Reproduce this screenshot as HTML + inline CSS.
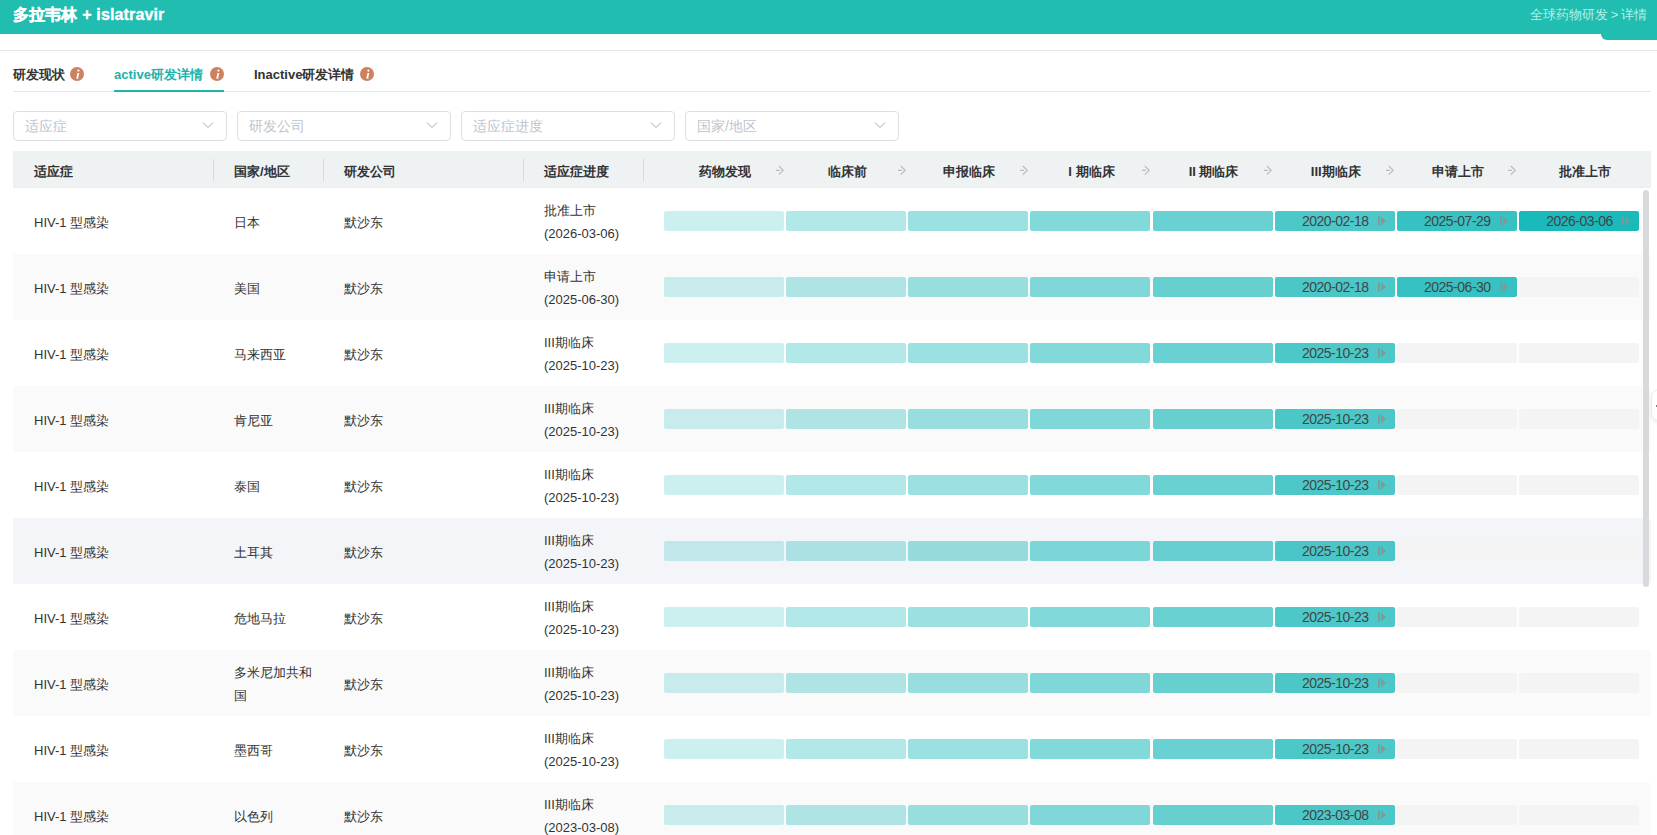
<!DOCTYPE html><html><head><meta charset="utf-8"><style>
*{margin:0;padding:0;box-sizing:border-box}
html,body{width:1657px;height:835px;overflow:hidden;background:#fff}
body{font-family:"Liberation Sans",sans-serif;font-size:13px;color:#333;position:relative}
.a{position:absolute;white-space:nowrap}
.hdr{left:0;top:0;width:1657px;height:34px;background:#20BDB0}
.htab{left:1601px;top:30px;width:56px;height:10px;background:#20BDB0;border-bottom-left-radius:6px}
.title{left:13px;top:5px;font-size:16px;font-weight:bold;color:#fff;line-height:20px;-webkit-text-stroke:0.35px #fff;letter-spacing:0.15px}
.crumb{right:10px;top:7px;font-size:13px;color:#B0F2E8;line-height:16px;word-spacing:-1px}
.line{background:#E6E6E6;height:1px}
.tab{top:66px;font-weight:bold;font-size:13px;line-height:18px;color:#333}
.dd{top:111px;width:214px;height:30px;border:1px solid #DCDFE6;border-radius:4px}
.dd span{position:absolute;left:11px;top:6px;font-size:14px;color:#C0C4CC;line-height:16px}
.dd svg{position:absolute;left:188px;top:9px}
.th{left:13px;top:151px;width:1638px;height:37px;background:#EEF2F3;border-bottom:1px solid #E9ECF2}
.tht{top:164px;font-weight:bold;line-height:16px}
.div{top:159px;width:1px;height:22px;background:#D6DADC}
.row{left:13px;width:1638px;height:66px;border-radius:0 4px 4px 0}
.cell{line-height:16px}
.bar{height:20px;border-radius:2px}
.dt{font-size:14px;color:#444;line-height:20px;text-align:center;letter-spacing:-0.5px;text-indent:1px}
.sb{left:1643px;top:190px;width:6px;height:397px;border-radius:3px;background:#D8D9DC}
</style></head><body><div class="a hdr"></div><div class="a htab"></div><div class="a title">多拉韦林 + islatravir</div><div class="a crumb">全球药物研发 &gt; 详情</div><div class="a line" style="left:0;top:50px;width:1657px"></div><div class="a line" style="left:13px;top:91px;width:1638px;background:#E4E7ED"></div><div class="a tab" style="left:13px">研发现状</div><div class="a tab" style="left:114px;color:#20B2A8">active研发详情</div><div class="a" style="left:114px;top:90px;width:110px;height:2px;background:#20B5AA"></div><div class="a tab" style="left:254px">Inactive研发详情</div><div class="a" style="left:70px;top:67px;line-height:0"><svg width="14" height="14" viewBox="0 0 14 14"><circle cx="7" cy="7" r="7" fill="#CC825E"/><circle cx="8.4" cy="3.6" r="1.1" fill="#fff"/><path d="M7.5 5.9 L9.3 5.9 L8.1 10.9 L9 10.9 L8.8 11.6 L5.9 11.6 L6.1 10.9 L6.4 10.9 Z" fill="#fff"/></svg></div><div class="a" style="left:210px;top:67px;line-height:0"><svg width="14" height="14" viewBox="0 0 14 14"><circle cx="7" cy="7" r="7" fill="#CC825E"/><circle cx="8.4" cy="3.6" r="1.1" fill="#fff"/><path d="M7.5 5.9 L9.3 5.9 L8.1 10.9 L9 10.9 L8.8 11.6 L5.9 11.6 L6.1 10.9 L6.4 10.9 Z" fill="#fff"/></svg></div><div class="a" style="left:360px;top:67px;line-height:0"><svg width="14" height="14" viewBox="0 0 14 14"><circle cx="7" cy="7" r="7" fill="#CC825E"/><circle cx="8.4" cy="3.6" r="1.1" fill="#fff"/><path d="M7.5 5.9 L9.3 5.9 L8.1 10.9 L9 10.9 L8.8 11.6 L5.9 11.6 L6.1 10.9 L6.4 10.9 Z" fill="#fff"/></svg></div><div class="a dd" style="left:13px"><span>适应症</span><svg width="12" height="8" viewBox="0 0 12 8"><path d="M1 1.5 L6 6.5 L11 1.5" fill="none" stroke="#A8ADB5" stroke-width="1"/></svg></div><div class="a dd" style="left:237px"><span>研发公司</span><svg width="12" height="8" viewBox="0 0 12 8"><path d="M1 1.5 L6 6.5 L11 1.5" fill="none" stroke="#A8ADB5" stroke-width="1"/></svg></div><div class="a dd" style="left:461px"><span>适应症进度</span><svg width="12" height="8" viewBox="0 0 12 8"><path d="M1 1.5 L6 6.5 L11 1.5" fill="none" stroke="#A8ADB5" stroke-width="1"/></svg></div><div class="a dd" style="left:685px"><span>国家/地区</span><svg width="12" height="8" viewBox="0 0 12 8"><path d="M1 1.5 L6 6.5 L11 1.5" fill="none" stroke="#A8ADB5" stroke-width="1"/></svg></div><div class="a th"></div><div class="a tht" style="left:34px">适应症</div><div class="a tht" style="left:234px">国家/地区</div><div class="a tht" style="left:344px">研发公司</div><div class="a tht" style="left:544px">适应症进度</div><div class="a div" style="left:213px"></div><div class="a div" style="left:323px"></div><div class="a div" style="left:523px"></div><div class="a div" style="left:643px"></div><div class="a tht" style="left:665.00px;width:120.00px;text-align:center">药物发现</div><div class="a" style="left:776.00px;top:165px;line-height:0"><svg width="10" height="11" viewBox="0 0 10 11"><path d="M0 5.3 H4 M2.8 1 L7.2 5.3 L2.8 9.6" fill="none" stroke="#B9BDC3" stroke-width="1.2"/></svg></div><div class="a tht" style="left:787.14px;width:120.00px;text-align:center">临床前</div><div class="a" style="left:897.92px;top:165px;line-height:0"><svg width="10" height="11" viewBox="0 0 10 11"><path d="M0 5.3 H4 M2.8 1 L7.2 5.3 L2.8 9.6" fill="none" stroke="#B9BDC3" stroke-width="1.2"/></svg></div><div class="a tht" style="left:909.28px;width:120.00px;text-align:center">申报临床</div><div class="a" style="left:1019.84px;top:165px;line-height:0"><svg width="10" height="11" viewBox="0 0 10 11"><path d="M0 5.3 H4 M2.8 1 L7.2 5.3 L2.8 9.6" fill="none" stroke="#B9BDC3" stroke-width="1.2"/></svg></div><div class="a tht" style="left:1031.42px;width:120.00px;text-align:center">I 期临床</div><div class="a" style="left:1141.76px;top:165px;line-height:0"><svg width="10" height="11" viewBox="0 0 10 11"><path d="M0 5.3 H4 M2.8 1 L7.2 5.3 L2.8 9.6" fill="none" stroke="#B9BDC3" stroke-width="1.2"/></svg></div><div class="a tht" style="left:1153.56px;width:120.00px;text-align:center">II 期临床</div><div class="a" style="left:1263.68px;top:165px;line-height:0"><svg width="10" height="11" viewBox="0 0 10 11"><path d="M0 5.3 H4 M2.8 1 L7.2 5.3 L2.8 9.6" fill="none" stroke="#B9BDC3" stroke-width="1.2"/></svg></div><div class="a tht" style="left:1275.70px;width:120.00px;text-align:center">III期临床</div><div class="a" style="left:1385.60px;top:165px;line-height:0"><svg width="10" height="11" viewBox="0 0 10 11"><path d="M0 5.3 H4 M2.8 1 L7.2 5.3 L2.8 9.6" fill="none" stroke="#B9BDC3" stroke-width="1.2"/></svg></div><div class="a tht" style="left:1397.84px;width:120.00px;text-align:center">申请上市</div><div class="a" style="left:1507.52px;top:165px;line-height:0"><svg width="10" height="11" viewBox="0 0 10 11"><path d="M0 5.3 H4 M2.8 1 L7.2 5.3 L2.8 9.6" fill="none" stroke="#B9BDC3" stroke-width="1.2"/></svg></div><div class="a tht" style="left:1524.98px;width:120.00px;text-align:center">批准上市</div><div class="a row" style="top:188px;background:#FFFFFF"></div><div class="a cell" style="left:34px;top:215px">HIV-1 型感染</div><div class="a cell" style="left:234px;top:215px">日本</div><div class="a cell" style="left:344px;top:215px">默沙东</div><div class="a cell" style="left:544px;top:198.5px;line-height:23px">批准上市<br>(2026-03-06)</div><div class="a bar" style="left:664.00px;top:211px;width:120.00px;background:rgba(26,185,186,0.225)"></div><div class="a bar" style="left:786.14px;top:211px;width:120.00px;background:rgba(26,185,186,0.335)"></div><div class="a bar" style="left:908.28px;top:211px;width:120.00px;background:rgba(26,185,186,0.43)"></div><div class="a bar" style="left:1030.42px;top:211px;width:120.00px;background:rgba(26,185,186,0.55)"></div><div class="a bar" style="left:1152.56px;top:211px;width:120.00px;background:rgba(26,185,186,0.65)"></div><div class="a bar" style="left:1274.70px;top:211px;width:120.00px;background:rgba(26,185,186,0.78)"><div class="a dt" style="left:0;top:0;width:120.00px">2020-02-18</div><svg class="a" style="left:103px;top:5px" width="10" height="10" viewBox="0 0 10 10"><rect x="0" y="0.5" width="2" height="9" fill="#8F8F8F" fill-opacity="0.85"/><path d="M3 0.5 L8 5 L3 9.5 Z" fill="#8F8F8F" fill-opacity="0.85"/></svg></div><div class="a bar" style="left:1396.84px;top:211px;width:120.00px;background:rgba(26,185,186,0.88)"><div class="a dt" style="left:0;top:0;width:120.00px">2025-07-29</div><svg class="a" style="left:103px;top:5px" width="10" height="10" viewBox="0 0 10 10"><rect x="0" y="0.5" width="2" height="9" fill="#8F8F8F" fill-opacity="0.85"/><path d="M3 0.5 L8 5 L3 9.5 Z" fill="#8F8F8F" fill-opacity="0.85"/></svg></div><div class="a bar" style="left:1518.98px;top:211px;width:120.00px;background:rgba(26,185,186,1.0)"><div class="a dt" style="left:0;top:0;width:120.00px">2026-03-06</div><svg class="a" style="left:103px;top:5px" width="10" height="10" viewBox="0 0 10 10"><rect x="0" y="0.5" width="2" height="9" fill="#8F8F8F" fill-opacity="0.85"/><path d="M3 0.5 L8 5 L3 9.5 Z" fill="#8F8F8F" fill-opacity="0.85"/></svg></div><div class="a row" style="top:254px;background:#FAFAFA"></div><div class="a cell" style="left:34px;top:281px">HIV-1 型感染</div><div class="a cell" style="left:234px;top:281px">美国</div><div class="a cell" style="left:344px;top:281px">默沙东</div><div class="a cell" style="left:544px;top:264.5px;line-height:23px">申请上市<br>(2025-06-30)</div><div class="a bar" style="left:664.00px;top:277px;width:120.00px;background:rgba(26,185,186,0.225)"></div><div class="a bar" style="left:786.14px;top:277px;width:120.00px;background:rgba(26,185,186,0.335)"></div><div class="a bar" style="left:908.28px;top:277px;width:120.00px;background:rgba(26,185,186,0.43)"></div><div class="a bar" style="left:1030.42px;top:277px;width:120.00px;background:rgba(26,185,186,0.55)"></div><div class="a bar" style="left:1152.56px;top:277px;width:120.00px;background:rgba(26,185,186,0.65)"></div><div class="a bar" style="left:1274.70px;top:277px;width:120.00px;background:rgba(26,185,186,0.78)"><div class="a dt" style="left:0;top:0;width:120.00px">2020-02-18</div><svg class="a" style="left:103px;top:5px" width="10" height="10" viewBox="0 0 10 10"><rect x="0" y="0.5" width="2" height="9" fill="#8F8F8F" fill-opacity="0.85"/><path d="M3 0.5 L8 5 L3 9.5 Z" fill="#8F8F8F" fill-opacity="0.85"/></svg></div><div class="a bar" style="left:1396.84px;top:277px;width:120.00px;background:rgba(26,185,186,0.88)"><div class="a dt" style="left:0;top:0;width:120.00px">2025-06-30</div><svg class="a" style="left:103px;top:5px" width="10" height="10" viewBox="0 0 10 10"><rect x="0" y="0.5" width="2" height="9" fill="#8F8F8F" fill-opacity="0.85"/><path d="M3 0.5 L8 5 L3 9.5 Z" fill="#8F8F8F" fill-opacity="0.85"/></svg></div><div class="a bar" style="left:1518.98px;top:277px;width:120.00px;background:#F4F4F4"></div><div class="a row" style="top:320px;background:#FFFFFF"></div><div class="a cell" style="left:34px;top:347px">HIV-1 型感染</div><div class="a cell" style="left:234px;top:347px">马来西亚</div><div class="a cell" style="left:344px;top:347px">默沙东</div><div class="a cell" style="left:544px;top:330.5px;line-height:23px">III期临床<br>(2025-10-23)</div><div class="a bar" style="left:664.00px;top:343px;width:120.00px;background:rgba(26,185,186,0.225)"></div><div class="a bar" style="left:786.14px;top:343px;width:120.00px;background:rgba(26,185,186,0.335)"></div><div class="a bar" style="left:908.28px;top:343px;width:120.00px;background:rgba(26,185,186,0.43)"></div><div class="a bar" style="left:1030.42px;top:343px;width:120.00px;background:rgba(26,185,186,0.55)"></div><div class="a bar" style="left:1152.56px;top:343px;width:120.00px;background:rgba(26,185,186,0.65)"></div><div class="a bar" style="left:1274.70px;top:343px;width:120.00px;background:rgba(26,185,186,0.78)"><div class="a dt" style="left:0;top:0;width:120.00px">2025-10-23</div><svg class="a" style="left:103px;top:5px" width="10" height="10" viewBox="0 0 10 10"><rect x="0" y="0.5" width="2" height="9" fill="#8F8F8F" fill-opacity="0.85"/><path d="M3 0.5 L8 5 L3 9.5 Z" fill="#8F8F8F" fill-opacity="0.85"/></svg></div><div class="a bar" style="left:1396.84px;top:343px;width:120.00px;background:#F4F4F4"></div><div class="a bar" style="left:1518.98px;top:343px;width:120.00px;background:#F4F4F4"></div><div class="a row" style="top:386px;background:#FAFAFA"></div><div class="a cell" style="left:34px;top:413px">HIV-1 型感染</div><div class="a cell" style="left:234px;top:413px">肯尼亚</div><div class="a cell" style="left:344px;top:413px">默沙东</div><div class="a cell" style="left:544px;top:396.5px;line-height:23px">III期临床<br>(2025-10-23)</div><div class="a bar" style="left:664.00px;top:409px;width:120.00px;background:rgba(26,185,186,0.225)"></div><div class="a bar" style="left:786.14px;top:409px;width:120.00px;background:rgba(26,185,186,0.335)"></div><div class="a bar" style="left:908.28px;top:409px;width:120.00px;background:rgba(26,185,186,0.43)"></div><div class="a bar" style="left:1030.42px;top:409px;width:120.00px;background:rgba(26,185,186,0.55)"></div><div class="a bar" style="left:1152.56px;top:409px;width:120.00px;background:rgba(26,185,186,0.65)"></div><div class="a bar" style="left:1274.70px;top:409px;width:120.00px;background:rgba(26,185,186,0.78)"><div class="a dt" style="left:0;top:0;width:120.00px">2025-10-23</div><svg class="a" style="left:103px;top:5px" width="10" height="10" viewBox="0 0 10 10"><rect x="0" y="0.5" width="2" height="9" fill="#8F8F8F" fill-opacity="0.85"/><path d="M3 0.5 L8 5 L3 9.5 Z" fill="#8F8F8F" fill-opacity="0.85"/></svg></div><div class="a bar" style="left:1396.84px;top:409px;width:120.00px;background:#F4F4F4"></div><div class="a bar" style="left:1518.98px;top:409px;width:120.00px;background:#F4F4F4"></div><div class="a row" style="top:452px;background:#FFFFFF"></div><div class="a cell" style="left:34px;top:479px">HIV-1 型感染</div><div class="a cell" style="left:234px;top:479px">泰国</div><div class="a cell" style="left:344px;top:479px">默沙东</div><div class="a cell" style="left:544px;top:462.5px;line-height:23px">III期临床<br>(2025-10-23)</div><div class="a bar" style="left:664.00px;top:475px;width:120.00px;background:rgba(26,185,186,0.225)"></div><div class="a bar" style="left:786.14px;top:475px;width:120.00px;background:rgba(26,185,186,0.335)"></div><div class="a bar" style="left:908.28px;top:475px;width:120.00px;background:rgba(26,185,186,0.43)"></div><div class="a bar" style="left:1030.42px;top:475px;width:120.00px;background:rgba(26,185,186,0.55)"></div><div class="a bar" style="left:1152.56px;top:475px;width:120.00px;background:rgba(26,185,186,0.65)"></div><div class="a bar" style="left:1274.70px;top:475px;width:120.00px;background:rgba(26,185,186,0.78)"><div class="a dt" style="left:0;top:0;width:120.00px">2025-10-23</div><svg class="a" style="left:103px;top:5px" width="10" height="10" viewBox="0 0 10 10"><rect x="0" y="0.5" width="2" height="9" fill="#8F8F8F" fill-opacity="0.85"/><path d="M3 0.5 L8 5 L3 9.5 Z" fill="#8F8F8F" fill-opacity="0.85"/></svg></div><div class="a bar" style="left:1396.84px;top:475px;width:120.00px;background:#F4F4F4"></div><div class="a bar" style="left:1518.98px;top:475px;width:120.00px;background:#F4F4F4"></div><div class="a row" style="top:518px;background:#F3F5F8"></div><div class="a cell" style="left:34px;top:545px">HIV-1 型感染</div><div class="a cell" style="left:234px;top:545px">土耳其</div><div class="a cell" style="left:344px;top:545px">默沙东</div><div class="a cell" style="left:544px;top:528.5px;line-height:23px">III期临床<br>(2025-10-23)</div><div class="a bar" style="left:664.00px;top:541px;width:120.00px;background:rgba(26,185,186,0.225)"></div><div class="a bar" style="left:786.14px;top:541px;width:120.00px;background:rgba(26,185,186,0.335)"></div><div class="a bar" style="left:908.28px;top:541px;width:120.00px;background:rgba(26,185,186,0.43)"></div><div class="a bar" style="left:1030.42px;top:541px;width:120.00px;background:rgba(26,185,186,0.55)"></div><div class="a bar" style="left:1152.56px;top:541px;width:120.00px;background:rgba(26,185,186,0.65)"></div><div class="a bar" style="left:1274.70px;top:541px;width:120.00px;background:rgba(26,185,186,0.78)"><div class="a dt" style="left:0;top:0;width:120.00px">2025-10-23</div><svg class="a" style="left:103px;top:5px" width="10" height="10" viewBox="0 0 10 10"><rect x="0" y="0.5" width="2" height="9" fill="#8F8F8F" fill-opacity="0.85"/><path d="M3 0.5 L8 5 L3 9.5 Z" fill="#8F8F8F" fill-opacity="0.85"/></svg></div><div class="a bar" style="left:1396.84px;top:541px;width:120.00px;background:#F4F4F4"></div><div class="a bar" style="left:1518.98px;top:541px;width:120.00px;background:#F4F4F4"></div><div class="a row" style="top:584px;background:#FFFFFF"></div><div class="a cell" style="left:34px;top:611px">HIV-1 型感染</div><div class="a cell" style="left:234px;top:611px">危地马拉</div><div class="a cell" style="left:344px;top:611px">默沙东</div><div class="a cell" style="left:544px;top:594.5px;line-height:23px">III期临床<br>(2025-10-23)</div><div class="a bar" style="left:664.00px;top:607px;width:120.00px;background:rgba(26,185,186,0.225)"></div><div class="a bar" style="left:786.14px;top:607px;width:120.00px;background:rgba(26,185,186,0.335)"></div><div class="a bar" style="left:908.28px;top:607px;width:120.00px;background:rgba(26,185,186,0.43)"></div><div class="a bar" style="left:1030.42px;top:607px;width:120.00px;background:rgba(26,185,186,0.55)"></div><div class="a bar" style="left:1152.56px;top:607px;width:120.00px;background:rgba(26,185,186,0.65)"></div><div class="a bar" style="left:1274.70px;top:607px;width:120.00px;background:rgba(26,185,186,0.78)"><div class="a dt" style="left:0;top:0;width:120.00px">2025-10-23</div><svg class="a" style="left:103px;top:5px" width="10" height="10" viewBox="0 0 10 10"><rect x="0" y="0.5" width="2" height="9" fill="#8F8F8F" fill-opacity="0.85"/><path d="M3 0.5 L8 5 L3 9.5 Z" fill="#8F8F8F" fill-opacity="0.85"/></svg></div><div class="a bar" style="left:1396.84px;top:607px;width:120.00px;background:#F4F4F4"></div><div class="a bar" style="left:1518.98px;top:607px;width:120.00px;background:#F4F4F4"></div><div class="a row" style="top:650px;background:#FAFAFA"></div><div class="a cell" style="left:34px;top:677px">HIV-1 型感染</div><div class="a cell" style="left:234px;top:660.5px;line-height:23px;white-space:normal">多米尼加共和<br>国</div><div class="a cell" style="left:344px;top:677px">默沙东</div><div class="a cell" style="left:544px;top:660.5px;line-height:23px">III期临床<br>(2025-10-23)</div><div class="a bar" style="left:664.00px;top:673px;width:120.00px;background:rgba(26,185,186,0.225)"></div><div class="a bar" style="left:786.14px;top:673px;width:120.00px;background:rgba(26,185,186,0.335)"></div><div class="a bar" style="left:908.28px;top:673px;width:120.00px;background:rgba(26,185,186,0.43)"></div><div class="a bar" style="left:1030.42px;top:673px;width:120.00px;background:rgba(26,185,186,0.55)"></div><div class="a bar" style="left:1152.56px;top:673px;width:120.00px;background:rgba(26,185,186,0.65)"></div><div class="a bar" style="left:1274.70px;top:673px;width:120.00px;background:rgba(26,185,186,0.78)"><div class="a dt" style="left:0;top:0;width:120.00px">2025-10-23</div><svg class="a" style="left:103px;top:5px" width="10" height="10" viewBox="0 0 10 10"><rect x="0" y="0.5" width="2" height="9" fill="#8F8F8F" fill-opacity="0.85"/><path d="M3 0.5 L8 5 L3 9.5 Z" fill="#8F8F8F" fill-opacity="0.85"/></svg></div><div class="a bar" style="left:1396.84px;top:673px;width:120.00px;background:#F4F4F4"></div><div class="a bar" style="left:1518.98px;top:673px;width:120.00px;background:#F4F4F4"></div><div class="a row" style="top:716px;background:#FFFFFF"></div><div class="a cell" style="left:34px;top:743px">HIV-1 型感染</div><div class="a cell" style="left:234px;top:743px">墨西哥</div><div class="a cell" style="left:344px;top:743px">默沙东</div><div class="a cell" style="left:544px;top:726.5px;line-height:23px">III期临床<br>(2025-10-23)</div><div class="a bar" style="left:664.00px;top:739px;width:120.00px;background:rgba(26,185,186,0.225)"></div><div class="a bar" style="left:786.14px;top:739px;width:120.00px;background:rgba(26,185,186,0.335)"></div><div class="a bar" style="left:908.28px;top:739px;width:120.00px;background:rgba(26,185,186,0.43)"></div><div class="a bar" style="left:1030.42px;top:739px;width:120.00px;background:rgba(26,185,186,0.55)"></div><div class="a bar" style="left:1152.56px;top:739px;width:120.00px;background:rgba(26,185,186,0.65)"></div><div class="a bar" style="left:1274.70px;top:739px;width:120.00px;background:rgba(26,185,186,0.78)"><div class="a dt" style="left:0;top:0;width:120.00px">2025-10-23</div><svg class="a" style="left:103px;top:5px" width="10" height="10" viewBox="0 0 10 10"><rect x="0" y="0.5" width="2" height="9" fill="#8F8F8F" fill-opacity="0.85"/><path d="M3 0.5 L8 5 L3 9.5 Z" fill="#8F8F8F" fill-opacity="0.85"/></svg></div><div class="a bar" style="left:1396.84px;top:739px;width:120.00px;background:#F4F4F4"></div><div class="a bar" style="left:1518.98px;top:739px;width:120.00px;background:#F4F4F4"></div><div class="a row" style="top:782px;background:#FAFAFA"></div><div class="a cell" style="left:34px;top:809px">HIV-1 型感染</div><div class="a cell" style="left:234px;top:809px">以色列</div><div class="a cell" style="left:344px;top:809px">默沙东</div><div class="a cell" style="left:544px;top:792.5px;line-height:23px">III期临床<br>(2023-03-08)</div><div class="a bar" style="left:664.00px;top:805px;width:120.00px;background:rgba(26,185,186,0.225)"></div><div class="a bar" style="left:786.14px;top:805px;width:120.00px;background:rgba(26,185,186,0.335)"></div><div class="a bar" style="left:908.28px;top:805px;width:120.00px;background:rgba(26,185,186,0.43)"></div><div class="a bar" style="left:1030.42px;top:805px;width:120.00px;background:rgba(26,185,186,0.55)"></div><div class="a bar" style="left:1152.56px;top:805px;width:120.00px;background:rgba(26,185,186,0.65)"></div><div class="a bar" style="left:1274.70px;top:805px;width:120.00px;background:rgba(26,185,186,0.78)"><div class="a dt" style="left:0;top:0;width:120.00px">2023-03-08</div><svg class="a" style="left:103px;top:5px" width="10" height="10" viewBox="0 0 10 10"><rect x="0" y="0.5" width="2" height="9" fill="#8F8F8F" fill-opacity="0.85"/><path d="M3 0.5 L8 5 L3 9.5 Z" fill="#8F8F8F" fill-opacity="0.85"/></svg></div><div class="a bar" style="left:1396.84px;top:805px;width:120.00px;background:#F4F4F4"></div><div class="a bar" style="left:1518.98px;top:805px;width:120.00px;background:#F4F4F4"></div><div class="a sb"></div><div class="a" style="left:1651px;top:389px;width:20px;height:32px;border:1px solid #E8EAEE;border-radius:8px;background:#fff;box-shadow:0 3px 5px rgba(0,0,0,0.06)"></div><div class="a" style="left:1656px;top:405px;width:3px;height:2px;background:#555;border-radius:1px"></div></body></html>
